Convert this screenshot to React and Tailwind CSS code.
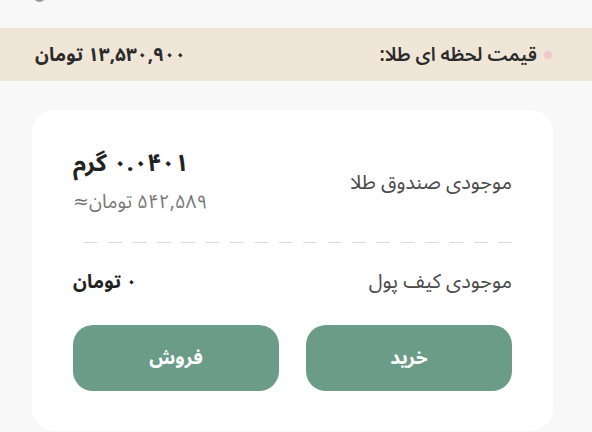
import React from "react";

const fa = { fontFamily: '"Noto Sans Arabic", "DejaVu Sans", sans-serif' };

function App() {
  return (
    <div dir="rtl" style={fa} className="w-[592px] h-[432px] overflow-hidden bg-[#f8f8f8]">
      {/* بالای صفحه (آیکن بریده شده) */}
      <div className="h-[28px] flex justify-end px-[33px]">
        <div className="w-[13px] h-[13px] -mt-[11px] rounded-full border-2 border-[#9a9a9a]" />
      </div>

      {/* قیمت لحظه ای */}
      <div className="h-[53px] bg-[#f0e6d8] flex items-center justify-between pr-[40px] pl-[35px]">
        <div className="flex items-center gap-[7px]">
          <span className="w-[8px] h-[8px] rounded-full bg-[#efc9cd]" />
          <div className="text-[19px] font-semibold text-[#2b2b2b] leading-[28px]">قیمت لحظه ای طلا:</div>
        </div>
        <div className="text-[19px] font-bold text-[#2b2b2b] leading-[28px]">۱۳,۵۳۰,۹۰۰ تومان</div>
      </div>

      {/* کارت موجودی */}
      <div className="mt-[29px] mr-[39px] ml-[32px] bg-white rounded-[22px] px-[41px] pt-[38px] pb-[40px]">
        <div className="flex items-center justify-between">
          <div className="text-[20px] text-[#4a4a4a] leading-[30px]">موجودی صندوق طلا</div>
          <div className="flex flex-col items-end gap-[6px] text-left">
            <div className="text-[24px] font-bold text-[#222] leading-[32px]">۰.۰۴۰۱ گرم</div>
            <div className="text-[19px] text-[#777] leading-[32px]">۵۴۲,۵۸۹ تومان≈</div>
          </div>
        </div>

        <div className="mt-[24px] h-[1px] bg-[linear-gradient(to_left,#d9d9d9_58%,transparent_0)] bg-[length:24.4px_1px]" />

        <div className="mt-[24px] flex items-center justify-between">
          <div className="text-[20px] text-[#4a4a4a] leading-[30px]">موجودی کیف پول</div>
          <div className="text-[19px] font-bold text-[#222] leading-[30px]">۰ تومان</div>
        </div>

        <div className="mt-[28px] grid grid-cols-2 gap-[27px]">
          <button className="h-[66px] rounded-[20px] bg-[#6a9c87] text-white text-[19px] font-bold">خرید</button>
          <button className="h-[66px] rounded-[20px] bg-[#6a9c87] text-white text-[19px] font-bold">فروش</button>
        </div>
      </div>
    </div>
  );
}

export default App;
